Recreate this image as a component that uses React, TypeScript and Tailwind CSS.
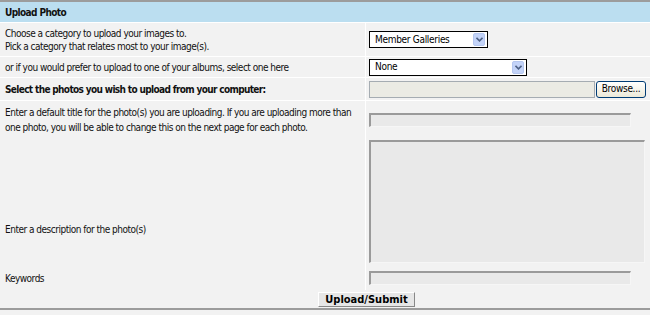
import React from "react";

function SelectBox({ w, label }: { w: string; label: string }) {
  return (
    <div className={`${w} h-[17px] bg-white border border-black flex items-center justify-between pl-[5px] pr-[2px]`}>
      <span className="text-[10px] tracking-[-0.3px] leading-none text-black">{label}</span>
      <span className="w-[12px] h-[13px] rounded-[2px] bg-[#c3d3f8] border border-[#b5c7f0] flex items-center justify-center">
        <svg width="7" height="5" viewBox="0 0 7 5">
          <path d="M0.5 0.8 L3.5 3.8 L6.5 0.8" fill="none" stroke="#4d6185" strokeWidth="1.6" />
        </svg>
      </span>
    </div>
  );
}

function Inset({ cls }: { cls: string }) {
  return (
    <div className={`${cls} bg-[#e9e9e9] border-t-2 border-l-2 border-t-[#9a9a9a] border-l-[#9a9a9a] border-r border-b border-r-[#f6f6f6] border-b-[#f6f6f6]`} />
  );
}

export default function App() {
  return (
    <div
      className="w-[650px] h-[315px] bg-[#f2f2f2] text-[#111] text-[10px] tracking-[-0.5px]"
      style={{ fontFamily: "Tahoma, 'DejaVu Sans Condensed', 'Liberation Sans', sans-serif" }}
    >
      <div className="border-t-2 border-[#9c9c9c]">
        <div className="h-[21px] bg-[#bbdef0] flex items-center pl-[5px] font-bold tracking-[-0.6px] border-b border-white">
          Upload Photo
        </div>

        <div className="flex h-[34px] border-b border-white">
          <div className="w-[366px] border-r border-white pl-[5px] flex flex-col justify-center leading-[13px]">
            <div>Choose a category to upload your images to.</div>
            <div>Pick a category that relates most to your image(s).</div>
          </div>
          <div className="flex-1 pl-[3px] flex items-center">
            <SelectBox w="w-[119px]" label="Member Galleries" />
          </div>
        </div>

        <div className="flex h-[21px] border-b border-white">
          <div className="w-[366px] border-r border-white pl-[5px] flex items-center whitespace-nowrap">
            or if you would prefer to upload to one of your albums, select one here
          </div>
          <div className="flex-1 pl-[3px] flex items-center">
            <SelectBox w="w-[158px]" label="None" />
          </div>
        </div>

        <div className="flex h-[23px] border-b border-white">
          <div className="w-[366px] border-r border-white pl-[5px] flex items-center font-bold tracking-[-0.65px] whitespace-nowrap">
            Select the photos you wish to upload from your computer:
          </div>
          <div className="flex-1 pl-[3px] flex items-center">
            <div className="w-[226px] h-[17px] bg-[#ebebe4] border border-[#a5acb2]" />
            <div className="ml-[1px] w-[50px] h-[17px] rounded-[3px] border border-[#003c74] bg-[linear-gradient(#ffffff,#ece9d8)] flex items-center justify-center text-[10px] tracking-[-0.3px] leading-none text-black">
              Browse...
            </div>
          </div>
        </div>

        <div className="flex h-[37px]">
          <div className="w-[366px] border-r border-white pl-[5px] flex flex-col justify-center leading-[15px] whitespace-nowrap">
            <div>Enter a default title for the photo(s) you are uploading. If you are uploading more than</div>
            <div>one photo, you will be able to change this on the next page for each photo.</div>
          </div>
          <div className="flex-1 pl-[3px] pt-[12px]">
            <Inset cls="w-[262px] h-[14px]" />
          </div>
        </div>

        <div className="flex h-[128px]">
          <div className="w-[366px] border-r border-white pl-[5px] pt-[84px]">
            Enter a description for the photo(s)
          </div>
          <div className="flex-1 pl-[3px] pt-[2px]">
            <Inset cls="w-[276px] h-[123px]" />
          </div>
        </div>

        <div className="flex h-[24px]">
          <div className="w-[366px] border-r border-white pl-[5px] flex items-center">Keywords</div>
          <div className="flex-1 pl-[3px] pt-[5px]">
            <Inset cls="w-[262px] h-[14px]" />
          </div>
        </div>

        <div className="h-[20px] flex items-center pl-[318px] border-b-2 border-[#9c9c9c]">
          <div className="w-[97px] h-[15px] bg-[#e6e6e6] border-t border-l border-white border-r border-b border-r-[#888] border-b-[#888] flex items-center justify-center font-bold text-[11px] tracking-[0px] leading-none text-black">
            Upload/Submit
          </div>
        </div>
      </div>
    </div>
  );
}
